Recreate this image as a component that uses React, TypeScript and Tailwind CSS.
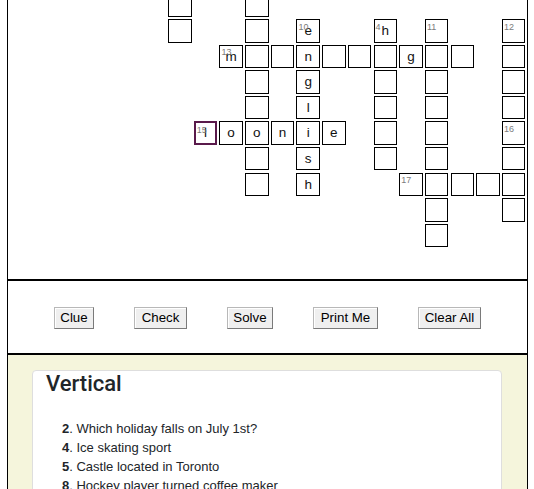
import React from "react";

type Cell = { n?: string; l?: string; sel?: boolean } | null;

const C = (n?: string, l?: string, sel?: boolean): Cell => ({ n, l, sel });

function buildRows(): Cell[][] {
  const empty = () => Array.from({ length: 14 }, () => null as Cell);
  const rows: Cell[][] = Array.from({ length: 10 }, empty);
  const put = (r: number, c: number, cell: Cell = C()) => {
    rows[r][c] = cell;
  };
  put(0, 0);
  put(0, 3);
  put(1, 0);
  put(1, 3);
  put(1, 5, C("10", "e"));
  put(1, 8, C("4", "h"));
  put(1, 10, C("11"));
  put(1, 13, C("12"));
  put(2, 2, C("13", "m"));
  for (let c = 3; c <= 11; c++) put(2, c);
  put(2, 5, C(undefined, "n"));
  put(2, 9, C(undefined, "g"));
  put(2, 13);
  [3, 4].forEach((r) => {
    put(r, 3);
    put(r, 8);
    put(r, 10);
    put(r, 13);
  });
  put(3, 5, C(undefined, "g"));
  put(4, 5, C(undefined, "l"));
  put(5, 1, C("15", "l", true));
  put(5, 2, C(undefined, "o"));
  put(5, 3, C(undefined, "o"));
  put(5, 4, C(undefined, "n"));
  put(5, 5, C(undefined, "i"));
  put(5, 6, C(undefined, "e"));
  put(5, 8);
  put(5, 10);
  put(5, 13, C("16"));
  put(6, 3);
  put(6, 5, C(undefined, "s"));
  put(6, 8);
  put(6, 10);
  put(6, 13);
  put(7, 3);
  put(7, 5, C(undefined, "h"));
  put(7, 9, C("17"));
  put(7, 10);
  put(7, 11);
  put(7, 12);
  put(7, 13);
  put(8, 10);
  put(8, 13);
  put(9, 10);
  return rows;
}

const rows = buildRows();

function GridCell({ cell }: { cell: Cell }) {
  if (!cell) return <div className="w-[23.5px] h-[23.5px] shrink-0" />;
  return (
    <div
      className={
        "relative w-[23.5px] h-[23.5px] shrink-0 bg-white flex items-center justify-center " +
        (cell.sel ? "border-2 border-[#5a1a4b]" : "border border-black")
      }
    >
      {cell.n && (
        <span className="absolute top-[2.5px] left-[1px] text-[9px] leading-none text-[#7c7c7c] font-['Liberation_Sans',sans-serif]">
          {cell.n}
        </span>
      )}
      {cell.l && (
        <span className="text-[13.5px] leading-none text-[#111] font-['Liberation_Sans',sans-serif]">
          {cell.l}
        </span>
      )}
    </div>
  );
}

function Btn({ children, w }: { children: React.ReactNode; w: string }) {
  return (
    <button
      className={
        w +
        " h-[22px] px-0 text-[13.3px] leading-[16px] text-black text-center bg-[#efefef] border border-[#b8b8b8] border-r-[#7a7a7a] border-b-[#7a7a7a] shadow-[inset_1px_1px_0_#ffffff] font-['Liberation_Sans',sans-serif]"
      }
    >
      {children}
    </button>
  );
}

const clues: [string, string][] = [
  ["2", "Which holiday falls on July 1st?"],
  ["4", "Ice skating sport"],
  ["5", "Castle located in Toronto"],
  ["8", "Hockey player turned coffee maker"],
  ["10", "Official language of Canada"],
];

export default function App() {
  return (
    <div className="bg-white overflow-hidden h-[489px]">
      <div className="ml-[7px] w-[521px] border-x border-black">
        <div className="h-[281px] border-b-2 border-black overflow-hidden">
          <div className="-mt-[6.6px] pl-[160px] flex flex-col gap-[2.1px]">
            {rows.map((row, ri) => (
              <div key={ri} className="flex gap-[2.2px]">
                {row.map((cell, ci) => (
                  <GridCell key={ci} cell={cell} />
                ))}
              </div>
            ))}
          </div>
        </div>
        <div className="h-[74px] border-b-2 border-black flex items-center justify-center gap-[40px] pt-[1px]">
          <Btn w="w-[40px]">Clue</Btn>
          <Btn w="w-[53px]">Check</Btn>
          <Btn w="w-[46px]">Solve</Btn>
          <Btn w="w-[65px]">Print Me</Btn>
          <Btn w="w-[63px]">Clear All</Btn>
        </div>
        <div className="bg-[#f5f5dc] pt-[15px] px-[24px] h-[200px]">
          <div className="w-[470px] bg-white border border-[#dedede] rounded-[4px] h-[300px]">
            <h2 className="pl-[13px] text-[22px] leading-[26px] font-medium text-[#212529] font-['Roboto',sans-serif]">
              Vertical
            </h2>
            <ol className="mt-[22px] pl-[29px] text-[13px] leading-[19px] text-[#212529] font-['Liberation_Sans',sans-serif]">
              {clues.map(([n, t]) => (
                <li key={n}>
                  <span className="font-bold">{n}</span>. {t}
                </li>
              ))}
            </ol>
          </div>
        </div>
      </div>
    </div>
  );
}
